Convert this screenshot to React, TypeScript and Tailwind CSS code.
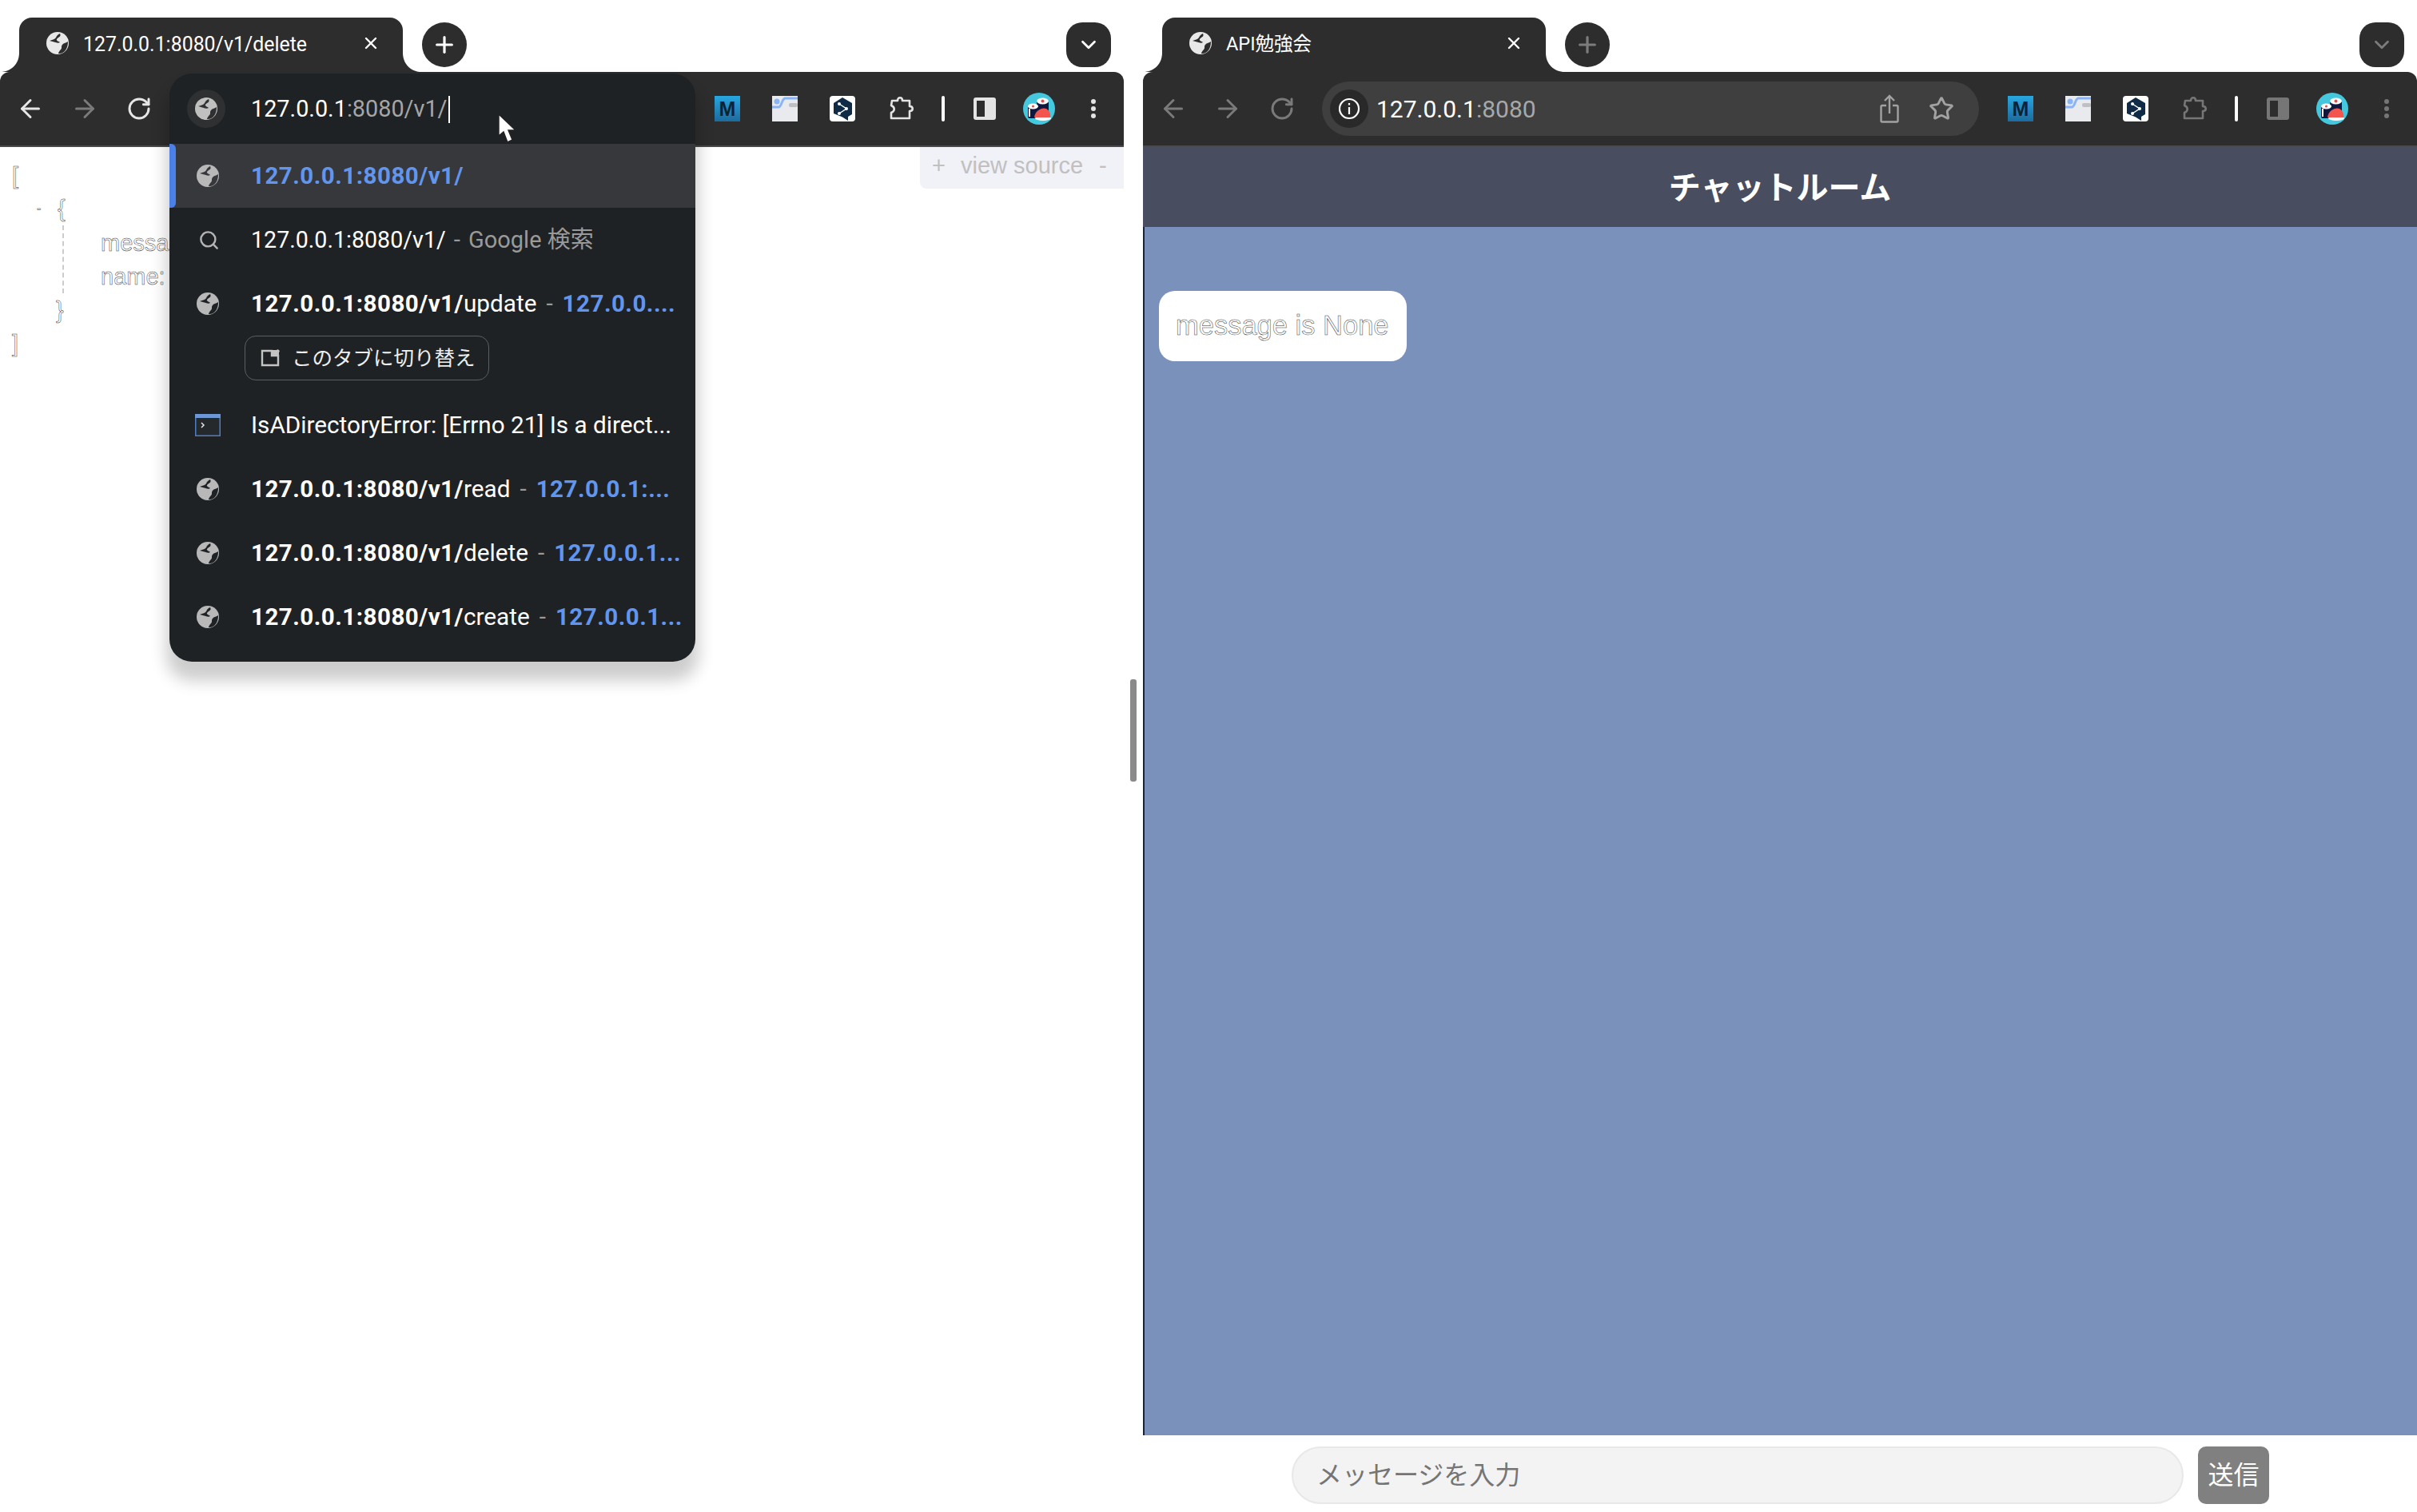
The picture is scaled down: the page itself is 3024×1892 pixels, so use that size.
import React from "react";
import { ArrowLeft, ArrowRight, RotateCw, X, Plus, ChevronDown, Search, Star } from "lucide-react";

const UI = "font-['Roboto','Noto_Sans_CJK_JP',sans-serif]";
const CJK = "font-['Liberation_Sans','Noto_Sans_CJK_JP',sans-serif]";

function GlobeIcon({ fill, dark }: { fill: string; dark: string }) {
  return (
    <svg className="w-[28px] h-[28px] shrink-0" viewBox="0 0 28 28">
      <circle cx="14" cy="14" r="14" fill={fill} />
      <path d="M17 2 C19 6 15 6 13 9 C12 11 16 12 17 13 C14 15 9 12 4 11 C6 10 10 10 12 7 C13 5 14 3 17 2 Z" fill={dark} />
      <path d="M27 12 C24 14 21 14 20 16 C18 18 20 20 18 22 C16 24 15 26 15 27 C17 27 20 27 23 24 C26 21 27 16 27 12 Z" fill={dark} />
    </svg>
  );
}

function Flare({ side }: { side: "left" | "right" }) {
  return side === "left" ? (
    <svg className="absolute bottom-0 left-[-24px] w-[24px] h-[24px]" viewBox="0 0 24 24">
      <path d="M24 0 C24 14 14 24 0 24 L24 24 Z" fill="#2d2d2d" />
    </svg>
  ) : (
    <svg className="absolute bottom-0 right-[-24px] w-[24px] h-[24px]" viewBox="0 0 24 24">
      <path d="M0 0 C0 14 10 24 24 24 L0 24 Z" fill="#2d2d2d" />
    </svg>
  );
}

function TabStrip({ title, dim, titleClass }: { title: string; dim: boolean; titleClass: string }) {
  return (
    <div className="h-[90px] flex items-start pt-[22px] pl-[24px] pr-[16px]">
      <div className="relative w-[480px] h-[68px] bg-[#2d2d2d] rounded-t-[16px] flex items-center pl-[34px]">
        <Flare side="left" />
        <Flare side="right" />
        <div className="mt-[-4px]">
          <GlobeIcon fill="#e8e8e8" dark="#2d2d2d" />
        </div>
        <span className={`ml-[18px] text-white ${titleClass} ${UI}`}>{title}</span>
        <X className="ml-auto mr-[28px] w-[24px] h-[24px] text-white mt-[-4px]" strokeWidth={2.4} />
      </div>
      <div className="ml-[24px] mt-[6px] w-[56px] h-[56px] rounded-full bg-[#2d2d2d] flex items-center justify-center">
        <Plus className={`w-[32px] h-[32px] ${dim ? "text-[#7c7c7c]" : "text-white"}`} strokeWidth={2.4} />
      </div>
      <div className="ml-auto mt-[6px] w-[56px] h-[56px] rounded-[20px] bg-[#2d2d2d] flex items-center justify-center">
        <ChevronDown className={`w-[30px] h-[30px] ${dim ? "text-[#7c7c7c]" : "text-white"}`} strokeWidth={2.2} />
      </div>
    </div>
  );
}

function ShareIcon() {
  return (
    <svg className="w-[24px] h-[36px] text-[#a2a2a2]" viewBox="0 0 24 36" fill="none" stroke="currentColor" strokeWidth="2.4">
      <path d="M8 14 H3 a1.5 1.5 0 0 0 -1.5 1.5 V33 a1.5 1.5 0 0 0 1.5 1.5 H21 a1.5 1.5 0 0 0 1.5 -1.5 V15.5 a1.5 1.5 0 0 0 -1.5 -1.5 H16" />
      <path d="M12 24 V2 M6 8 L12 2 L18 8" />
    </svg>
  );
}

function Puzzle({ c }: { c: string }) {
  return (
    <svg className="w-[32px] h-[32px]" viewBox="0 0 32 32" fill="none" stroke={c} strokeWidth="2.6" strokeLinejoin="round">
      <path d="M4 6 H11 C11 1 17 1 17 6 H26 V13 C31 13 31 19 26 19 V28 H3 V21 C8 19 8 14 3 12 Z" />
    </svg>
  );
}

function Sushi() {
  return (
    <svg className="w-[40px] h-[40px]" viewBox="0 0 40 40">
      <circle cx="20" cy="20" r="20" fill="#45c8dd" />
      <rect x="17" y="9" width="15" height="17" rx="2" fill="#10183f" />
      <ellipse cx="24.5" cy="10.5" rx="7.5" ry="4" fill="#ffffff" />
      <circle cx="24.5" cy="10.5" r="2" fill="#ee4b4b" />
      <rect x="6" y="16" width="13" height="16" rx="2" fill="#10183f" />
      <rect x="7" y="20" width="2" height="10" fill="#ffffff" />
      <ellipse cx="12.5" cy="17" rx="6.5" ry="3.5" fill="#ffffff" />
      <circle cx="12.5" cy="17" r="1.6" fill="#ee4b4b" />
      <ellipse cx="25" cy="32" rx="10" ry="3" fill="#ffffff" />
      <path d="M14 31 C15 22 24 18 29 20 C33 22 35 27 34 31 Z" fill="#f2564f" />
    </svg>
  );
}

function Extensions({ dim }: { dim: boolean }) {
  const muted = dim ? "#767676" : "#e4e4e4";
  return (
    <div className="flex items-center shrink-0 h-full">
      <div className="w-[32px] h-[32px] bg-gradient-to-b from-[#27a7e2] to-[#1c6b9d] flex items-center justify-center">
        <span className="text-[25px] leading-none font-bold text-[#0e2233] font-['Liberation_Sans',sans-serif]">M</span>
      </div>
      <svg className="ml-[40px] w-[32px] h-[32px]" viewBox="0 0 32 32">
        <rect width="32" height="32" fill="#e8eaed" />
        <path d="M0 14 H8 C12 14 12 4 16 3 H32" fill="none" stroke="#8ab4f8" strokeWidth="3" />
        <circle cx="6" cy="7" r="3.5" fill="#8ab4f8" />
        <rect x="21" y="9" width="11" height="5" rx="2" fill="#bdc1c6" />
      </svg>
      <svg className="ml-[40px] w-[32px] h-[32px]" viewBox="0 0 32 32">
        <rect width="32" height="32" rx="4" fill="#ffffff" />
        <path d="M16 2 L28 9 V23 L23 26 V31 L16 26.5 L5 22 V9 Z" fill="#0f2b46" />
        <path d="M12 10 L21 16 L12 22" fill="none" stroke="#ffffff" strokeWidth="1.5" />
        <circle cx="12" cy="10" r="2" fill="#fff" />
        <circle cx="21" cy="16" r="2" fill="#fff" />
        <circle cx="12" cy="22" r="2" fill="#fff" />
      </svg>
      <div className="ml-[42px]">
        <Puzzle c={muted} />
      </div>
      <div className="ml-[34px] w-[4px] h-[32px] rounded-full bg-white" />
      <svg className="ml-[36px] w-[28px] h-[28px]" viewBox="0 0 28 28">
        <rect width="28" height="28" rx="3" fill={muted} />
        <rect x="4" y="4" width="10" height="20" fill="#2d2d2d" />
      </svg>
      <div className="ml-[34px]">
        <Sushi />
      </div>
      <div className="ml-[44px] w-[8px] flex flex-col items-center gap-[3px]">
        <div className="w-[6px] h-[6px] rounded-full" style={{ background: muted }} />
        <div className="w-[6px] h-[6px] rounded-full" style={{ background: muted }} />
        <div className="w-[6px] h-[6px] rounded-full" style={{ background: muted }} />
      </div>
    </div>
  );
}

function Toolbar({ dim, children }: { dim: boolean; children: React.ReactNode }) {
  const nav = dim ? "text-[#7a7a7a]" : "text-[#e6e6e6]";
  return (
    <div className="h-[94px] bg-[#2d2d2d] border-b-2 border-[#4a4a4a] rounded-t-[12px] flex items-center pl-[20px] pr-[34px]">
      <ArrowLeft className={`w-[36px] h-[36px] ${nav}`} strokeWidth={2} />
      <ArrowRight className="ml-[32px] w-[36px] h-[36px] text-[#7a7a7a]" strokeWidth={2} />
      <RotateCw className={`ml-[34px] w-[32px] h-[32px] ${nav}`} strokeWidth={2.2} />
      {children}
      <Extensions dim={dim} />
    </div>
  );
}

const OUTLINE = "text-white [-webkit-text-stroke:0.5px_#3a3a3a] font-['Liberation_Sans',sans-serif]";

function JsonView() {
  return (
    <div className="relative flex-1 bg-white">
      <div className="absolute right-0 top-0 w-[255px] h-[52px] bg-[#f1f1f8] rounded-bl-[8px] flex items-center pb-[4px] pl-[15px] text-[29px] text-[#c0c0c0] font-['Liberation_Sans',sans-serif]">
        <span>+</span>
        <span className="ml-[19px]">view source</span>
        <span className="ml-[20px]">-</span>
      </div>
      <div className={`pt-[15px] text-[29px] ${OUTLINE}`}>
        <div className="h-[41px] leading-[42px] pl-[15px]">[</div>
        <div className="h-[42px] leading-[42px] flex pl-[46px]">
          <span className="w-[26px] text-[16px]">-</span>
          <span>{"{"}</span>
        </div>
        <div className="border-l-2 border-dashed border-[#cccccc] ml-[78px] pl-[46px] w-[400px]">
          <div className="h-[44px] leading-[44px]">message:</div>
          <div className="h-[41px] leading-[41px]">name:</div>
        </div>
        <div className="h-[42px] leading-[42px] pl-[70px]">{"}"}</div>
        <div className="h-[42px] leading-[42px] pl-[15px]">]</div>
      </div>
    </div>
  );
}

function Globe({ selected }: { selected?: boolean }) {
  return <GlobeIcon fill="#b8b8b8" dark={selected ? "#36383b" : "#1f2224"} />;
}

function Row({
  icon,
  children,
  selected,
}: {
  icon: React.ReactNode;
  children: React.ReactNode;
  selected?: boolean;
}) {
  return (
    <div className={`relative h-[80px] flex items-center text-[29.7px] whitespace-nowrap ${selected ? "bg-[#36383b]" : ""}`}>
      {selected && <div className="absolute left-0 top-0 w-[8px] h-[80px] rounded-r-[6px] bg-[#4a80e8]" />}
      <div className="w-[102px] pl-[34px] flex items-center justify-start shrink-0">{icon}</div>
      <div className="text-white">{children}</div>
    </div>
  );
}

const B = ({ children }: { children: React.ReactNode }) => (
  <span className="font-bold text-[29.5px] tracking-[0.5px]">{children}</span>
);
const Blue = ({ children }: { children: React.ReactNode }) => (
  <span className="font-bold text-[29.5px] tracking-[0.5px] text-[#6296ee]">{children}</span>
);
const Dash = () => <span className="text-[#9a9a9a] mx-[12px]">-</span>;
const V1 = "127.0.0.1:8080/v1/";

function Popup() {
  return (
    <div className={`absolute left-[212px] top-[92px] w-[658px] h-[736px] bg-[#1f2224] rounded-[28px] shadow-[0_20px_20px_4px_rgba(0,0,0,0.2)] ${UI}`}>
      <div className="relative h-[88px] flex items-center pl-[22px]">
        <div className="w-[48px] h-[48px] rounded-full bg-[#2e3032] flex items-center justify-center">
          <GlobeIcon fill="#c0c0c0" dark="#2e3032" />
        </div>
        <div className="ml-[32px] mt-[2px] text-[28.8px] text-[#a6a6a6] flex items-center">
          <span className="text-white">127.0.0.1</span>:8080/v1/
          <span className="w-[2px] h-[34px] bg-white ml-[1px]" />
        </div>
        <svg className="absolute left-[410px] top-[50px] w-[26px] h-[38px]" viewBox="0 0 26 38">
          <path d="M2 1 L2 28 L8 23 L13 36 L19 33 L14 21 L23 21 Z" fill="#ffffff" stroke="#222222" strokeWidth="1.4" />
        </svg>
      </div>
      <Row selected icon={<Globe selected />}>
        <Blue>{V1}</Blue>
      </Row>
      <Row icon={<Search className="w-[27px] h-[27px] text-[#b4b4b4] ml-[2px]" strokeWidth={2.2} />}>
        <span className="text-[28.6px]">{V1}</span>
        <span className="text-[#9a9a9a] mx-[10px]">-</span>
        <span className="text-[#9a9a9a] text-[29px]">Google 検索</span>
      </Row>
      <Row icon={<Globe />}>
        <B>{V1}</B>update
        <Dash />
        <Blue>127.0.0....</Blue>
      </Row>
      <div className="h-[72px] pl-[94px]">
        <div className="w-[306px] h-[56px] rounded-[14px] border border-[#5c5e60] flex items-center pl-[19px]">
          <svg className="w-[24px] h-[24px]" viewBox="0 0 24 24">
            <path d="M2 3 H14 V9 H22 V21 H2 Z" fill="none" stroke="#c4c4c4" strokeWidth="2.4" />
            <path d="M14 2 H20 A2 2 0 0 1 23 5 V10 H14 Z" fill="#c4c4c4" />
          </svg>
          <span className="ml-[15px] text-[25.5px] text-[#eeeeee]">このタブに切り替え</span>
        </div>
      </div>
      <Row
        icon={
          <svg className="w-[32px] h-[28px] ml-[-2px]" viewBox="0 0 32 28">
            <rect x="0.5" y="0.5" width="31" height="27" rx="1" fill="#26292c" stroke="#4f7fc0" strokeWidth="2" />
            <rect x="0" y="0" width="32" height="5" fill="#6b97d6" />
            <path d="M8 11 L11 14 L8 17" fill="none" stroke="#e8e8e8" strokeWidth="1.5" />
          </svg>
        }
      >
        IsADirectoryError: [Errno 21] Is a direct...
      </Row>
      <Row icon={<Globe />}>
        <B>{V1}</B>read
        <Dash />
        <Blue>127.0.0.1:...</Blue>
      </Row>
      <Row icon={<Globe />}>
        <B>{V1}</B>delete
        <Dash />
        <Blue>127.0.0.1...</Blue>
      </Row>
      <Row icon={<Globe />}>
        <B>{V1}</B>create
        <Dash />
        <Blue>127.0.0.1...</Blue>
      </Row>
    </div>
  );
}

export default function App() {
  return (
    <div className="relative w-[3024px] h-[1892px] bg-white flex overflow-hidden">
      <div className="w-[1406px] h-full flex flex-col">
        <TabStrip title="127.0.0.1:8080/v1/delete" dim={false} titleClass="text-[24.9px]" />
        <Toolbar dim={false}>
          <div className="flex-1" />
        </Toolbar>
        <JsonView />
      </div>

      <div className="w-[24px] pt-[850px] pl-[8px]">
        <div className="w-[8px] h-[128px] rounded-[3px] bg-[#8a8a8a]" />
      </div>

      <div className="w-[1594px] h-full flex flex-col">
        <TabStrip title="API勉強会" dim={true} titleClass="text-[23.5px]" />
        <Toolbar dim={true}>
          <div className={`ml-[34px] mr-[36px] flex-1 h-[68px] rounded-full bg-[#3f3f3f] flex items-center pl-[10px] pr-[31px] ${UI}`}>
            <div className="w-[48px] h-[48px] rounded-full bg-[#292929] flex items-center justify-center">
              <svg className="w-[28px] h-[28px]" viewBox="0 0 28 28" fill="none" stroke="#ffffff" strokeWidth="2.2">
                <circle cx="14" cy="14" r="12" />
                <path d="M14 12 V21 M14 7 V9.5" />
              </svg>
            </div>
            <span className="ml-[10px] text-[30px] text-white">
              127.0.0.1<span className="text-[#a8a8a8]">:8080</span>
            </span>
            <div className="ml-auto flex items-center gap-[37px]">
              <ShareIcon />
              <Star className="w-[32px] h-[32px] text-[#a2a2a2]" strokeWidth={2.2} />
            </div>
          </div>
        </Toolbar>
        <div className="h-[100px] bg-[#484e60] flex items-center justify-center">
          <h1 className={`mt-[2px] text-[40px] font-bold text-white ${CJK}`}>チャットルーム</h1>
        </div>
        <div className="flex-1 bg-[#7a92bb] border-l-2 border-[#1c2230] pl-[18px] pt-[80px]">
          <div className={`w-[310px] h-[88px] bg-white rounded-[20px] flex items-center pl-[21px] text-[34.5px] ${OUTLINE}`}>
            message is None
          </div>
        </div>
        <div className="h-[96px] flex items-start pt-[14px] pl-[186px] gap-[18px]">
          <input
            placeholder="メッセージを入力"
            className={`w-[1116px] h-[72px] rounded-full bg-[#f3f3f3] border-2 border-[#e8e8e8] pl-[29px] text-[32px] placeholder:text-[#757575] ${CJK}`}
          />
          <button className={`w-[89px] h-[72px] rounded-[10px] bg-[#808080] text-white text-[32px] ${CJK}`}>送信</button>
        </div>
      </div>

      <Popup />
    </div>
  );
}
